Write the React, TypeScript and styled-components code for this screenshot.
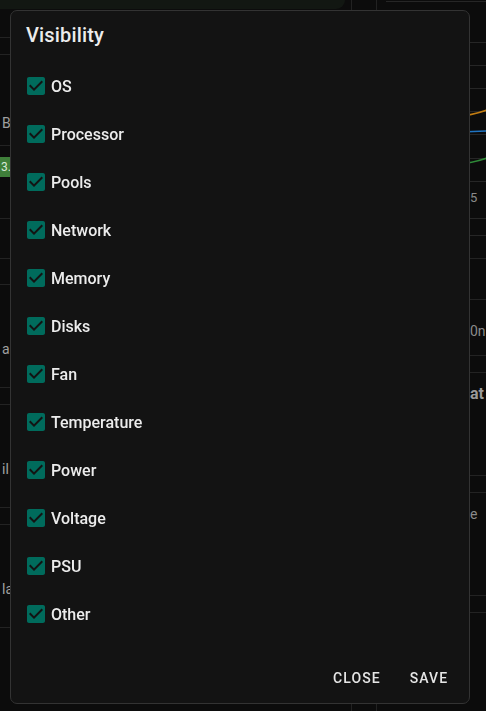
import styled, { createGlobalStyle } from "styled-components";

const GlobalStyle = createGlobalStyle`
  html, body {
    margin: 0;
    padding: 0;
    background: #0c0c0c;
    font-family: Roboto, "Noto Sans", "Liberation Sans", sans-serif;
    overflow: hidden;
  }
`;

// ---- dashboard behind the dialog ----

const Page = styled.div`
  display: grid;
  grid-template-columns: 352px 1fr;
  column-gap: 24px;
  width: 486px;
  height: 711px;
  overflow: hidden;
`;

const LeftPane = styled.div`
  display: flex;
  flex-direction: column;
  border-right: 1px solid #222;
`;

const TopCard = styled.div`
  height: 9px;
  margin-right: 6px;
  background: #121712;
  border-radius: 0 0 10px 0;
  margin-bottom: 28px;
`;

const Row = styled.div<{ $h: number; $top?: number }>`
  height: ${(p) => p.$h}px;
  border-top: 1px solid #232323;
  padding: ${(p) => p.$top ?? 0}px 0 0 2px;
  color: #a0a0a0;
  font-size: 14px;
  line-height: 16px;
  box-sizing: border-box;
  overflow: hidden;
`;

const Badge = styled.span`
  display: inline-block;
  background: #3f7f3a;
  color: #d8e8d6;
  font-size: 12px;
  line-height: 20px;
  padding: 0 4px 0 1px;
  margin-left: -2px;
`;

const RightPane = styled.div`
  display: flex;
  flex-direction: column;
  border-left: 1px solid #222;
`;

const ChartBox = styled.div`
  height: 258px;
  position: relative;
`;

const AxisLabel = styled.span`
  position: absolute;
  left: 93px;
  top: 190px;
  color: #8a8a8a;
  font-size: 13px;
`;

const RightRow = styled.div<{ $h: number; $top?: number; $bold?: boolean }>`
  height: ${(p) => p.$h}px;
  border-top: 1px solid #232323;
  padding: ${(p) => p.$top ?? 0}px 0 0 93px;
  color: ${(p) => (p.$bold ? "#9a9a9a" : "#8a8a8a")};
  font-size: ${(p) => (p.$bold ? "16px" : "14px")};
  font-weight: ${(p) => (p.$bold ? 700 : 400)};
  line-height: ${(p) => (p.$bold ? "18px" : "16px")};
  box-sizing: border-box;
  overflow: hidden;
`;

// ---- dialog ----

const Dialog = styled.div`
  position: fixed;
  top: 10px;
  left: 10px;
  width: 460px;
  height: 694px;
  box-sizing: border-box;
  background: #131313;
  border: 1px solid #333;
  border-radius: 7px;
  display: flex;
  flex-direction: column;
  color: #ececec;
`;

const Title = styled.h2`
  margin: 0;
  padding: 8px 15px 0;
  font-size: 20px;
  font-weight: 500;
  line-height: 32px;
  letter-spacing: 0.15px;
`;

const List = styled.div`
  display: flex;
  flex-direction: column;
  margin-top: 11px;
`;

const Option = styled.label`
  display: flex;
  align-items: center;
  height: 48px;
  padding-left: 13px;
  cursor: pointer;
`;

const Box = styled.svg`
  width: 24px;
  height: 24px;
  flex-shrink: 0;
`;

const OptionLabel = styled.span`
  margin-left: 3px;
  font-size: 16px;
  font-weight: 500;
  color: #ececec;
`;

const Actions = styled.div`
  margin-top: auto;
  display: flex;
  justify-content: flex-end;
  gap: 8px;
  padding: 8px 8px 7px;
`;

const TextButton = styled.button`
  background: none;
  border: none;
  min-width: 64px;
  padding: 6px 8px;
  font-family: inherit;
  font-size: 14px;
  font-weight: 500;
  line-height: 24.5px;
  letter-spacing: 1.1px;
  text-transform: uppercase;
  color: #e6e6e6;
  cursor: pointer;
`;

const options = [
  "OS",
  "Processor",
  "Pools",
  "Network",
  "Memory",
  "Disks",
  "Fan",
  "Temperature",
  "Power",
  "Voltage",
  "PSU",
  "Other",
];

function CheckIcon() {
  return (
    <Box viewBox="0 0 24 24">
      <path
        fill="#006b5c"
        d="M19 3H5c-1.11 0-2 .9-2 2v14c0 1.1.89 2 2 2h14c1.11 0 2-.9 2-2V5c0-1.1-.89-2-2-2zm-9 14l-5-5 1.41-1.41L10 14.17l7.59-7.59L19 8l-9 9z"
      />
    </Box>
  );
}

function Chart() {
  const grid = [1, 42, 65, 88, 111, 134, 158, 181, 218, 235];
  return (
    <svg width="110" height="258" style={{ position: "absolute", left: 0, top: 0 }}>
      {grid.map((y) => (
        <line key={y} x1={y === 1 ? 9 : 0} x2="110" y1={y + 0.5} y2={y + 0.5} stroke="#262626" />
      ))}
      <path d="M40 120 C70 119 90 117 110 110" stroke="#c27d12" strokeWidth="1.5" fill="none" />
      <path d="M40 133 C70 133 90 132 110 131" stroke="#1f74c2" strokeWidth="1.5" fill="none" />
      <path d="M40 166 C70 166 90 165 110 158" stroke="#2f8a38" strokeWidth="1.5" fill="none" />
    </svg>
  );
}

export default function App() {
  return (
    <>
      <GlobalStyle />
      <Page>
        <LeftPane>
          <TopCard />
          <Row $h={17} />
          <Row $h={91} $top={60}>B</Row>
          <Row $h={73} $top={11}>
            <Badge>3.</Badge>
          </Row>
          <Row $h={40} />
          <Row $h={26} />
          <Row $h={103} $top={56}>al</Row>
          <Row $h={17} />
          <Row $h={103} $top={56}>il</Row>
          <Row $h={17} />
          <Row $h={103} $top={56}>la</Row>
          <Row $h={84} />
        </LeftPane>
        <RightPane>
          <ChartBox>
            <Chart />
            <AxisLabel>5</AxisLabel>
          </ChartBox>
          <RightRow $h={41} />
          <RightRow $h={56} $top={23}>0n</RightRow>
          <RightRow $h={17} />
          <RightRow $h={103} $top={12} $bold>at</RightRow>
          <RightRow $h={17} />
          <RightRow $h={103} $top={13}>e</RightRow>
          <RightRow $h={17} />
          <RightRow $h={99} />
        </RightPane>
      </Page>
      <Dialog role="dialog" aria-labelledby="visibility-title">
        <Title id="visibility-title">Visibility</Title>
        <List>
          {options.map((name) => (
            <Option key={name}>
              <CheckIcon />
              <OptionLabel>{name}</OptionLabel>
            </Option>
          ))}
        </List>
        <Actions>
          <TextButton>Close</TextButton>
          <TextButton>Save</TextButton>
        </Actions>
      </Dialog>
    </>
  );
}
